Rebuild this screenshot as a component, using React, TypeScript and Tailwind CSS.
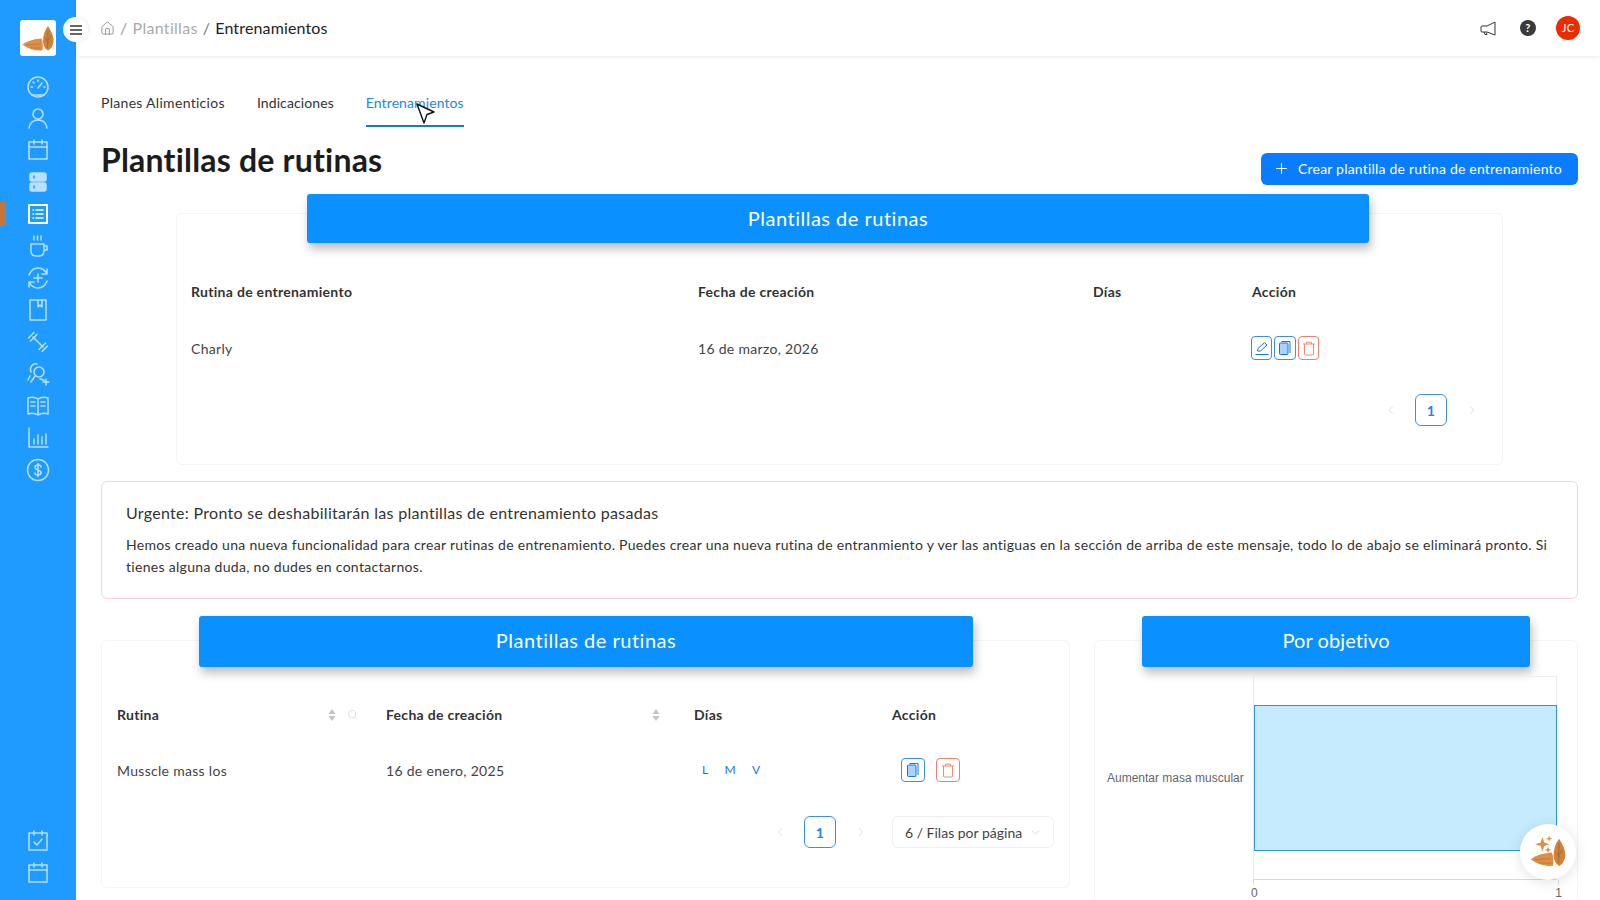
import React from "react";
import { ChevronLeft, ChevronRight, ChevronDown, Plus, Home, Search } from "lucide-react";

const F = "font-['Lato','Noto_Sans',sans-serif] tracking-[0.3px]";

function Ic({ children, active }: { children: React.ReactNode; active?: boolean }) {
  return (
    <div className="flex h-[32px] items-center justify-center">
      <svg width="24" height="24" viewBox="0 0 24 24" fill="none" stroke={active ? "#ffffff" : "#b9e0ff"} strokeWidth="1.5" strokeLinecap="round" strokeLinejoin="round">
        {children}
      </svg>
    </div>
  );
}

function Almonds({ size, sparkle }: { size: number; sparkle?: boolean }) {
  return (
    <svg width={size} height={size} viewBox="0 0 36 36">
      <path d="M2.5 24.5 C8 20.5 15 19 21.5 18.5 C23 22 23 27 22.5 30.5 C15 31 8 29 2.5 24.5Z" fill="#dc8f45" />
      <path d="M6 25 L20 24 M10 28 L21 28" stroke="#b5682c" strokeWidth="0.5" fill="none" />
      <path d="M28 6 C31 11 34 16 33.5 22 C33 26 31 29 28 30.5 C25 29 23 25 23 21 C23 15 25 10 28 6Z" fill="#cf8238" />
      <path d="M28 10 L27.5 28 M25 18 L29 23 M31 16 L28 20" stroke="#8a5a30" strokeWidth="0.5" fill="none" />
      {sparkle && (
        <g fill="#e08e42">
          <path d="M13 4.5 L14.6 9.4 L19.5 11 L14.6 12.6 L13 17.5 L11.4 12.6 L6.5 11 L11.4 9.4Z" />
          <path d="M19 3 L19.7 5.3 L22 6 L19.7 6.7 L19 9 L18.3 6.7 L16 6 L18.3 5.3Z" />
          <path d="M18 13 L18.8 15.2 L21 16 L18.8 16.8 L18 19 L17.2 16.8 L15 16 L17.2 15.2Z" />
        </g>
      )}
    </svg>
  );
}

function CopyIc({ size = 14 }: { size?: number }) {
  return (
    <svg width={size} height={size + 2} viewBox="0 0 14 16" fill="none" stroke="#1677d8" strokeWidth="1">
      <path d="M3.5 1.5 H12 V13" />
      <rect x="1.5" y="3" width="8.5" height="11.5" rx="1" fill="#a8d4fb" />
    </svg>
  );
}

function TrashIc({ size = 14 }: { size?: number }) {
  return (
    <svg width={size} height={size + 1} viewBox="0 0 14 15" fill="none" stroke="#ee8a76" strokeWidth="1">
      <path d="M1 3 H13 M4.5 3 V1.2 H9.5 V3" />
      <path d="M2.5 3 V13 Q2.5 14 3.5 14 H10.5 Q11.5 14 11.5 13 V3" />
    </svg>
  );
}

function EditIc() {
  return (
    <svg width="14" height="15" viewBox="0 0 14 15" fill="none" stroke="#1677d8" strokeWidth="1">
      <path d="M2.5 10 L3 7.5 L9.5 1.5 L12 4 L5.5 10 Z" />
      <path d="M0.5 13.5 H13.5" />
    </svg>
  );
}

function Pager() {
  return (
    <div className="flex items-center">
      <ChevronLeft size={14} strokeWidth={1.2} className="mr-[17px] text-[#d4d4d4]" />
      <div className="flex h-[32px] w-[32px] items-center justify-center rounded-md border border-[#3f8fdc] text-[14px] font-bold text-[#1f86dd]">1</div>
      <ChevronRight size={14} strokeWidth={1.2} className="ml-[18px] text-[#d4d4d4]" />
    </div>
  );
}

function Band({ title, cls }: { title: string; cls: string }) {
  return (
    <div className={`flex items-center justify-center rounded-[3px] bg-[#0a90ff] text-[20px] text-white shadow-[2px_6px_10px_rgba(0,0,0,0.26)] ${cls}`}>
      {title}
    </div>
  );
}

function Sort() {
  return (
    <svg width="10" height="14" viewBox="0 0 9 14" fill="#c4c4c4">
      <path d="M4.5 1 L8 6 H1Z M4.5 13 L1 8 H8Z" />
    </svg>
  );
}

export default function App() {
  return (
    <div className={`relative flex h-screen w-full overflow-hidden bg-white text-[#333] ${F}`}>
      <aside className="flex h-full w-[76px] shrink-0 flex-col bg-[#1f9bff]">
        <div className="mt-[20px] ml-[20px] flex h-[36px] w-[36px] items-center justify-center rounded-[3px] bg-white">
          <Almonds size={36} />
        </div>
        <div className="relative mt-[14px] flex flex-col">
          <div className="absolute top-[132px] left-0 h-[24px] w-[6px] bg-[#c5743a]" />
          <Ic><circle cx="12" cy="13" r="10" /><path d="M12 14 L16 9 M5 13 H6.5 M18 13 H19 M12 6 V7.5 M7 8 L8 9" /><path d="M6 21 H18" /></Ic>
          <Ic><circle cx="12" cy="8" r="5" /><path d="M3 22 C4 16 8 14 12 14 C16 14 20 16 21 22" /></Ic>
          <Ic><rect x="3" y="4" width="18" height="17" /><path d="M3 9 H21 M8 2 V6 M16 2 V6" /></Ic>
          <Ic>
            <rect x="4" y="3" width="16" height="8" rx="2" fill="#b9e0ff" />
            <rect x="4" y="13" width="16" height="8" rx="2" fill="#b9e0ff" />
            <path d="M8 6 V8 M8 16 V18" stroke="#1f9bff" />
          </Ic>
          <Ic active>
            <rect x="3" y="3" width="18" height="18" strokeWidth="2" />
            <path d="M10 8 H17 M10 12 H17 M10 16 H17 M7 8 H7.5 M7 12 H7.5 M7 16 H7.5" />
          </Ic>
          <Ic><path d="M5 10 H18 V17 C18 20 16 22 13 22 H10 C7 22 5 20 5 17Z M18 12 H21 V16 H18 M8 2 V6 M11.5 2 V6 M15 2 V6" /></Ic>
          <Ic><path d="M3 9 C5 4 9 2 12 2 C16 2 19 4 21 8 M21 15 C19 20 15 22 12 22 C8 22 5 20 3 16 M21 3 V8 H16 M3 21 V16 H8 M12 8 V16 M8 12 H16" /></Ic>
          <Ic><rect x="4" y="2" width="16" height="20" /><path d="M12 2 V9 L14 7 L16 9 V2" /></Ic>
          <Ic><path d="M7 7 L17 17 M2.5 8 L8 2.5 M4.5 11 L11 4.5 M13 19.5 L19.5 13 M16 21.5 L21.5 16" /></Ic>
          <Ic><circle cx="13" cy="10" r="5" /><path d="M9 14 L5 20 M5 10 C3 5 7 1 11 2 M4 14 L2 18 M14 17 C16 17 18 18 19 20 M20 17 V23 M17 20 H23" /></Ic>
          <Ic><path d="M12 5 C9 3 5 3 2 4 V20 C5 19 9 19 12 21 C15 19 19 19 22 20 V4 C19 3 15 3 12 5Z M12 5 V21 M5 8 H9 M5 12 H9 M15 8 H19 M15 12 H19" /></Ic>
          <Ic><path d="M3 2 V21 H22 M8 13 V18 M12 9 V18 M16 11 V18 M20 8 V18" /></Ic>
          <Ic><circle cx="12" cy="12" r="10.5" /><path d="M15 9 C15 7.5 13.5 7 12 7 C10.5 7 9 8 9 9.5 C9 12.5 15 11.5 15 14.5 C15 16 13.5 17 12 17 C10.5 17 9 16.5 9 15 M12 5.5 V18.5" /></Ic>
        </div>
        <div className="mt-auto mb-[11px] flex flex-col">
          <Ic><rect x="3" y="4" width="18" height="17" /><path d="M8 2 V6 M16 2 V6 M8 13 L11 16 L16 10" /></Ic>
          <Ic><rect x="3" y="4" width="18" height="17" /><path d="M3 9 H21 M8 2 V6 M16 2 V6" /></Ic>
        </div>
      </aside>

      <div className="absolute top-[17px] left-[63px] z-20 flex h-[25px] w-[25px] items-center justify-center rounded-full bg-white shadow-[1px_0_3px_rgba(0,0,0,0.08)]">
        <svg width="12" height="10" viewBox="0 0 12 10" stroke="#333" strokeWidth="1.3"><path d="M0 1 H12 M0 5 H12 M0 9 H12" /></svg>
      </div>

      <div className="flex h-full min-w-0 flex-1 flex-col">
        <header className="flex h-[56px] shrink-0 items-center justify-between bg-white pr-[20px] pl-[24px] shadow-[0_1px_4px_rgba(0,0,0,0.08)]">
          <div className="flex items-center text-[16px]">
            <Home size={15} strokeWidth={1.2} className="text-[#777]" />
            <span className="mx-[5px] text-[#999]">/</span>
            <span className="text-[#aaa]">Plantillas</span>
            <span className="mx-[5px] text-[#777]">/</span>
            <span className="tracking-[0.15px] text-[#222]">Entrenamientos</span>
          </div>
          <div className="flex items-center">
            <svg width="16" height="15" viewBox="0 0 16 15" fill="none" stroke="#333" strokeWidth="1"><path d="M15 1 V14 L7 11 H2 Q1 11 1 10 V6 Q1 5 2 5 H7 Z M4 11 L5 13.5 H7 L6.5 11.5" /></svg>
            <div className="ml-[24px] flex h-[16px] w-[16px] items-center justify-center rounded-full bg-[#3a3a3a] text-[11px] font-bold text-white">?</div>
            <div className="ml-[20px] flex h-[24px] w-[24px] items-center justify-center rounded-full bg-[#ea2c00] text-[11px] text-white">JC</div>
          </div>
        </header>

        <main className="flex min-h-0 flex-1 flex-col pr-[22px] pl-[25px]">
          <nav className="mt-[34px] flex h-[37px] shrink-0 gap-[32px] text-[14px] text-[#333]">
            <div className="h-full pt-[2px]">Planes Alimenticios</div>
            <div className="h-full pt-[2px] tracking-[0.1px]">Indicaciones</div>
            <div className="h-full border-b-2 border-[#1677d8] pt-[2px] tracking-[0.1px] text-[#1f86dd]">Entrenamientos</div>
          </nav>

          <div className="flex h-[67px] shrink-0 items-start justify-between">
            <h1 className="mt-[13px] text-[32px] leading-[40px] font-bold tracking-[0.2px] text-[#1c1c1c]">Plantillas de rutinas</h1>
            <button className="mt-[26px] flex h-[32px] w-[317px] items-center justify-center gap-[8px] rounded-md bg-[#0a7cff] pr-[4px] pb-[1px] text-[14px] tracking-[0.2px] text-white">
              <Plus size={17} strokeWidth={1.5} />
              Crear plantilla de rutina de entrenamiento
            </button>
          </div>

          <section className="mx-[75px] mt-[19px] h-[252px] shrink-0 rounded-md border border-[#f5f5f5] pr-[15px] pl-[14px]">
            <Band title="Plantillas de rutinas" cls="mt-[-20px] ml-[116px] h-[49px] w-[1062px] pb-[1px] tracking-[0.5px]" />
            <div className="mt-[38px] grid grid-cols-[507px_395px_159px_1fr] text-[14px] font-bold text-[#333]">
              <div>Rutina de entrenamiento</div>
              <div>Fecha de creación</div>
              <div>Días</div>
              <div>Acción</div>
            </div>
            <div className="mt-[34px] grid grid-cols-[507px_395px_159px_1fr] items-center text-[14px] text-[#444]">
              <div>Charly</div>
              <div>16 de marzo, 2026</div>
              <div />
              <div className="ml-[-1px] flex gap-[2px]">
                <div className="flex h-[24px] w-[21px] items-center justify-center rounded-[4px] border border-[#3f8fdc]"><EditIc /></div>
                <div className="flex h-[24px] w-[22px] items-center justify-center rounded-[4px] border border-[#3f8fdc]"><CopyIc /></div>
                <div className="flex h-[24px] w-[21px] items-center justify-center rounded-[4px] border border-[#e8836f]"><TrashIc /></div>
              </div>
            </div>
            <div className="mt-[34px] flex justify-end pr-[8px]"><Pager /></div>
          </section>

          <section className="mt-[16px] h-[118px] shrink-0 rounded-md border border-[#f7d4da] px-[24px] pt-[20px]">
            <div className="text-[16px] leading-[22px] text-[#333]">Urgente: Pronto se deshabilitarán las plantillas de entrenamiento pasadas</div>
            <p className="mt-[10px] text-[14px] leading-[22px] text-[#333]">
              Hemos creado una nueva funcionalidad para crear rutinas de entrenamiento. Puedes crear una nueva rutina de entranmiento y ver las antiguas en la sección de arriba de este mensaje, todo lo de abajo se eliminará pronto. Si tienes alguna duda, no dudes en contactarnos.
            </p>
          </section>

          <div className="mt-[41px] grid shrink-0 grid-cols-[969px_484px] gap-[24px]">
            <section className="h-[248px] rounded-md border border-[#f5f5f5] px-[15px]">
              <Band title="Plantillas de rutinas" cls="mt-[-25px] ml-[82px] h-[51px] w-[774px] pb-[4px] tracking-[0.5px]" />
              <div className="mt-[37px] grid grid-cols-[269px_308px_198px_1fr] text-[14px] font-bold">
                <div className="flex items-center">
                  <span>Rutina</span>
                  <span className="ml-[168px]"><Sort /></span>
                  <Search size={11} strokeWidth={1.2} className="ml-[10px] text-[#c4c4c4]" />
                </div>
                <div className="flex items-center">
                  <span>Fecha de creación</span>
                  <span className="ml-[149px]"><Sort /></span>
                </div>
                <div>Días</div>
                <div>Acción</div>
              </div>
              <div className="mt-[33px] grid grid-cols-[269px_308px_198px_1fr] items-center text-[14px] text-[#444]">
                <div>Musscle mass los</div>
                <div>16 de enero, 2025</div>
                <div className="flex gap-[16px] pl-[8px] text-[12px] text-[#1677d8]">
                  <span>L</span>
                  <span>M</span>
                  <span>V</span>
                </div>
                <div className="flex gap-[11px] pl-[9px]">
                  <div className="flex h-[24px] w-[24px] items-center justify-center rounded-[4px] border border-[#3f8fdc]"><CopyIc /></div>
                  <div className="flex h-[24px] w-[24px] items-center justify-center rounded-[4px] border border-[#e8836f]"><TrashIc /></div>
                </div>
              </div>
              <div className="mt-[34px] flex items-center justify-end">
                <Pager />
                <div className="ml-[24px] flex h-[32px] w-[162px] items-center justify-between rounded-md border border-[#f0f0f0] pr-[11px] pl-[12px] text-[14px] tracking-normal text-[#444]">
                  6 / Filas por página
                  <ChevronDown size={13} strokeWidth={1.2} className="text-[#c4c4c4]" />
                </div>
              </div>
            </section>

            <section className="h-[300px] rounded-md border border-[#f5f5f5]">
              <Band title="Por objetivo" cls="mt-[-25px] ml-[47px] h-[51px] w-[388px] pb-[4px] tracking-[0.1px]" />
              <div className="flex">
                <div className="mt-[102px] ml-[12px] w-[146px] font-['Liberation_Sans',sans-serif] text-[12px] tracking-normal text-[#666]">Aumentar masa muscular</div>
                <div className="mt-[9px] flex h-[204px] w-[304px] flex-col border-x border-y border-x-[#e8e8e8] border-t-[#eee] border-b-[#d8d8d8]">
                  <div className="mt-[28px] h-[146px] w-[303px] border border-[#2e95ea] bg-[#c6ebff]" />
                </div>
              </div>
              <div className="relative mt-[6px] flex justify-between pr-[15px] pl-[156px] font-['Liberation_Sans',sans-serif] text-[12px] leading-[15px] tracking-normal text-[#666]">
                <span className="absolute top-[-6px] left-[158px] h-[5px] w-px bg-[#e0e0e0]" />
                <span className="absolute top-[-6px] right-[18px] h-[5px] w-px bg-[#e0e0e0]" />
                <span>0</span>
                <span>1</span>
              </div>
            </section>
          </div>
        </main>
      </div>

      <div className="absolute top-[824px] left-[1520px] z-20 flex h-[56px] w-[56px] items-center justify-center rounded-full bg-white shadow-[0_2px_14px_rgba(0,0,0,0.12)]">
        <Almonds size={40} sparkle />
      </div>

      <svg className="absolute top-[103px] left-[416px] z-30" width="20" height="22" viewBox="0 0 20 22">
        <path d="M1 1 L18 9 L11 11.5 L8 20 Z" fill="#fff" stroke="#111" strokeWidth="1.4" strokeLinejoin="round" />
      </svg>
    </div>
  );
}
